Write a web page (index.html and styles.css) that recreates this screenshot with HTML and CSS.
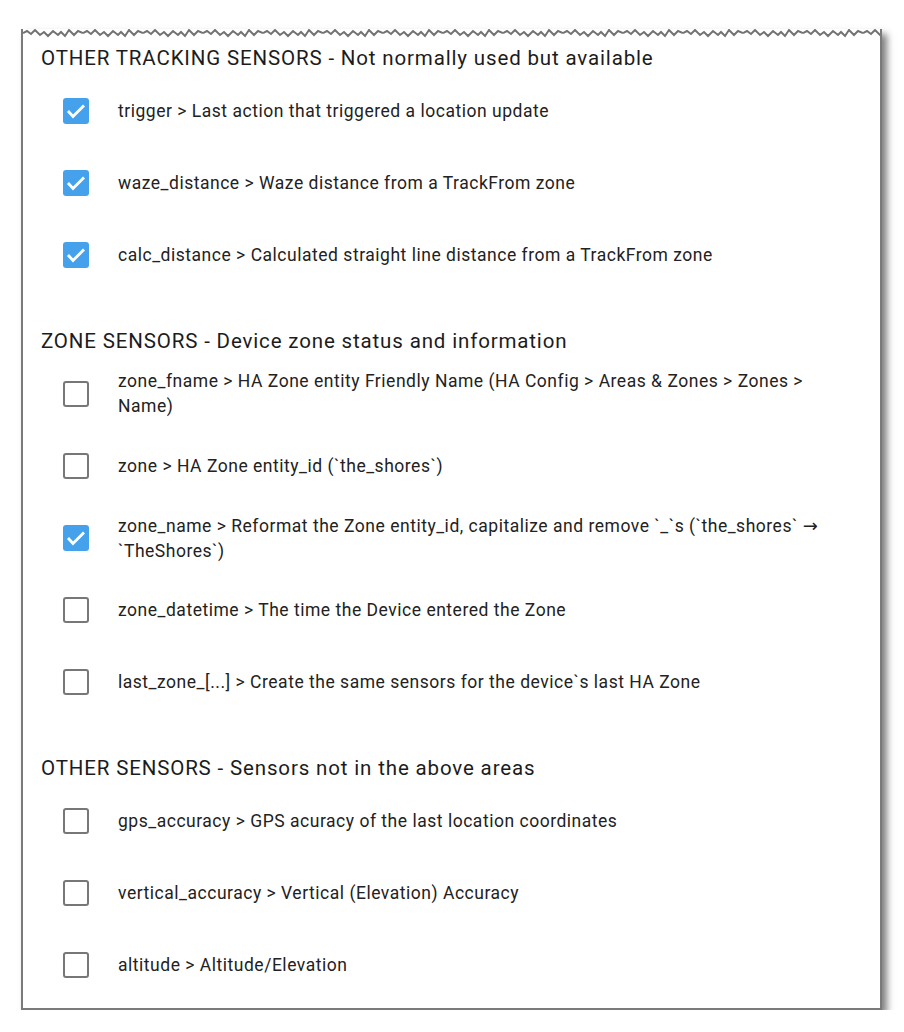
FILE: index.html
```html
<!DOCTYPE html>
<html lang="en">
<head>
<meta charset="utf-8">
<title>Sensors</title>
<link rel="stylesheet" href="styles.css">
</head>
<body>
<div class="card">
  <svg class="torn" width="857" height="9" viewBox="0 0 857 9" preserveAspectRatio="none" aria-hidden="true">
    <defs>
      <pattern id="zig" patternUnits="userSpaceOnUse" width="60" height="9">
        <polyline points="0,4 4,2 8,5 12,1 17,6 21,3 25,7 30,2 35,6 38,3 42,7 46,1 51,6 55,2 60,4" fill="none" stroke="#727272" stroke-width="2" stroke-linejoin="miter"/>
      </pattern>
    </defs>
    <rect x="0" y="0" width="857" height="9" fill="url(#zig)"/>
  </svg>
  <div class="content">
    <section class="group">
      <h2 class="heading">OTHER TRACKING SENSORS - Not normally used but available</h2>
      <div class="row"><span class="box checked"><svg viewBox="0 0 26 26"><polyline points="5,13 10,18.5 21,7.5" /></svg></span><span class="label">trigger &gt; Last action that triggered a location update</span></div>
      <div class="row"><span class="box checked"><svg viewBox="0 0 26 26"><polyline points="5,13 10,18.5 21,7.5" /></svg></span><span class="label">waze_distance &gt; Waze distance from a TrackFrom zone</span></div>
      <div class="row"><span class="box checked"><svg viewBox="0 0 26 26"><polyline points="5,13 10,18.5 21,7.5" /></svg></span><span class="label">calc_distance &gt; Calculated straight line distance from a TrackFrom zone</span></div>
    </section>
    <section class="group">
      <h2 class="heading">ZONE SENSORS - Device zone status and information</h2>
      <div class="row"><span class="box"></span><span class="label">zone_fname &gt; HA Zone entity Friendly Name (HA Config &gt; Areas &amp; Zones &gt; Zones &gt; Name)</span></div>
      <div class="row"><span class="box"></span><span class="label">zone &gt; HA Zone entity_id (`the_shores`)</span></div>
      <div class="row"><span class="box checked"><svg viewBox="0 0 26 26"><polyline points="5,13 10,18.5 21,7.5" /></svg></span><span class="label">zone_name &gt; Reformat the Zone entity_id, capitalize and remove `_`s (`the_shores` <span class="arrow">→</span> `TheShores`)</span></div>
      <div class="row"><span class="box"></span><span class="label">zone_datetime &gt; The time the Device entered the Zone</span></div>
      <div class="row"><span class="box"></span><span class="label">last_zone_[...] &gt; Create the same sensors for the device`s last HA Zone</span></div>
    </section>
    <section class="group">
      <h2 class="heading">OTHER SENSORS - Sensors not in the above areas</h2>
      <div class="row"><span class="box"></span><span class="label">gps_accuracy &gt; GPS acuracy of the last location coordinates</span></div>
      <div class="row"><span class="box"></span><span class="label">vertical_accuracy &gt; Vertical (Elevation) Accuracy</span></div>
      <div class="row"><span class="box"></span><span class="label">altitude &gt; Altitude/Elevation</span></div>
    </section>
  </div>
</div>
</body>
</html>
```
FILE: styles.css
```css
html, body {
  margin: 0;
  padding: 0;
  background: #ffffff;
}
body {
  font-family: Roboto, "Noto Sans", "Liberation Sans", sans-serif;
  color: #212121;
}
.card {
  margin: 29px 0 0 21px;
  width: 861px;
  box-sizing: border-box;
  border-left: 2px solid #7a7a7a;
  border-right: 2px solid #7a7a7a;
  border-bottom: 2px solid #7a7a7a;
  background: #fff;
  box-shadow: 5px 5px 7px rgba(0, 0, 0, 0.5);
}
.torn {
  display: block;
  width: 857px;
  height: 9px;
}
.content {
  padding: 3px 30px 7px 18px;
  display: flex;
  flex-direction: column;
  gap: 33px;
}
.group {
  display: flex;
  flex-direction: column;
}
.heading {
  margin: 0;
  font-weight: 400;
  font-size: 20.5px;
  line-height: 34px;
  color: #1c1c1c;
  letter-spacing: 0.85px;
}
.row {
  min-height: 72px;
  display: flex;
  align-items: center;
  padding-left: 22px;
}
.box {
  flex: none;
  width: 26px;
  height: 26px;
  box-sizing: border-box;
  border: 2.6px solid #777;
  border-radius: 3px;
  margin-right: 29px;
}
.box.checked {
  background: #45a1ec;
  border: none;
  display: flex;
  align-items: center;
  justify-content: center;
}
.box svg {
  width: 26px;
  height: 26px;
  flex: none;
}
.box polyline {
  fill: none;
  stroke: #fff;
  stroke-width: 2.8;
}
.label {
  font-size: 17.5px;
  line-height: 25px;
  color: #222;
  letter-spacing: 0.52px;
}
.arrow {
  font-family: "DejaVu Sans", sans-serif;
  font-size: 18px;
  letter-spacing: 0;
}
```
